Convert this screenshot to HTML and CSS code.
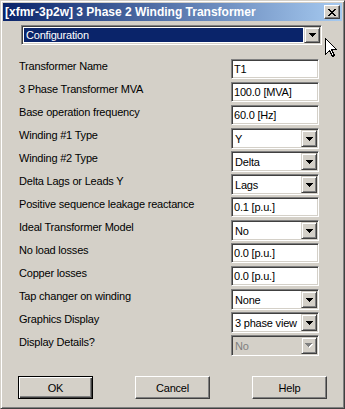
FILE: index.html
```html
<!DOCTYPE html>
<html lang="en">
<head>
  <meta charset="UTF-8">
  <title>[xfmr-3p2w] 3 Phase 2 Winding Transformer</title>
  <link rel="stylesheet" href="styles.css">
</head>
<body>
  <div class="window">
    <div class="titlebar">
      <span class="title">[xfmr-3p2w] 3 Phase 2 Winding Transformer</span>
      <div class="close">
        <svg width="8" height="7" viewBox="0 0 8 7" shape-rendering="crispEdges">
          <path d="M0 0h2v1h-2zM6 0h2v1h-2zM1 1h2v1h-2zM5 1h2v1h-2zM2 2h4v1h-4zM3 3h2v1h-2zM2 4h4v1h-4zM1 5h2v1h-2zM5 5h2v1h-2zM0 6h2v1h-2zM6 6h2v1h-2z" fill="#000"/>
        </svg>
      </div>
    </div>

    <!-- page selector -->
    <div class="field combo config">
      <div class="value"><span class="highlight">Configuration</span></div>
      <div class="arrow"><svg width="7" height="4" viewBox="0 0 7 4" shape-rendering="crispEdges"><path d="M0 0h7v1h-7zM1 1h5v1h-5zM2 2h3v1h-3zM3 3h1v1h-1z"/></svg></div>
    </div>

    <div class="form">
      <div class="label">Transformer Name</div>
      <div class="field edit"><div class="value">T1</div></div>

      <div class="label">3 Phase Transformer MVA</div>
      <div class="field edit"><div class="value">100.0 [MVA]</div></div>

      <div class="label">Base operation frequency</div>
      <div class="field edit"><div class="value">60.0 [Hz]</div></div>

      <div class="label">Winding #1 Type</div>
      <div class="field combo"><div class="value">Y</div><div class="arrow"><svg width="7" height="4" viewBox="0 0 7 4" shape-rendering="crispEdges"><path d="M0 0h7v1h-7zM1 1h5v1h-5zM2 2h3v1h-3zM3 3h1v1h-1z"/></svg></div></div>

      <div class="label">Winding #2 Type</div>
      <div class="field combo"><div class="value">Delta</div><div class="arrow"><svg width="7" height="4" viewBox="0 0 7 4" shape-rendering="crispEdges"><path d="M0 0h7v1h-7zM1 1h5v1h-5zM2 2h3v1h-3zM3 3h1v1h-1z"/></svg></div></div>

      <div class="label">Delta Lags or Leads Y</div>
      <div class="field combo"><div class="value">Lags</div><div class="arrow"><svg width="7" height="4" viewBox="0 0 7 4" shape-rendering="crispEdges"><path d="M0 0h7v1h-7zM1 1h5v1h-5zM2 2h3v1h-3zM3 3h1v1h-1z"/></svg></div></div>

      <div class="label">Positive sequence leakage reactance</div>
      <div class="field edit"><div class="value">0.1 [p.u.]</div></div>

      <div class="label">Ideal Transformer Model</div>
      <div class="field combo"><div class="value">No</div><div class="arrow"><svg width="7" height="4" viewBox="0 0 7 4" shape-rendering="crispEdges"><path d="M0 0h7v1h-7zM1 1h5v1h-5zM2 2h3v1h-3zM3 3h1v1h-1z"/></svg></div></div>

      <div class="label">No load losses</div>
      <div class="field edit"><div class="value">0.0 [p.u.]</div></div>

      <div class="label">Copper losses</div>
      <div class="field edit"><div class="value">0.0 [p.u.]</div></div>

      <div class="label">Tap changer on winding</div>
      <div class="field combo"><div class="value">None</div><div class="arrow"><svg width="7" height="4" viewBox="0 0 7 4" shape-rendering="crispEdges"><path d="M0 0h7v1h-7zM1 1h5v1h-5zM2 2h3v1h-3zM3 3h1v1h-1z"/></svg></div></div>

      <div class="label">Graphics Display</div>
      <div class="field combo"><div class="value">3 phase view</div><div class="arrow"><svg width="7" height="4" viewBox="0 0 7 4" shape-rendering="crispEdges"><path d="M0 0h7v1h-7zM1 1h5v1h-5zM2 2h3v1h-3zM3 3h1v1h-1z"/></svg></div></div>

      <div class="label">Display Details?</div>
      <div class="field combo disabled"><div class="value">No</div><div class="arrow"><svg width="8" height="5" viewBox="0 0 8 5" shape-rendering="crispEdges"><path d="M1 1h7v1h-7zM2 2h5v1h-5zM3 3h3v1h-3zM4 4h1v1h-1z" fill="#fff"/><path d="M0 0h7v1h-7zM1 1h5v1h-5zM2 2h3v1h-3zM3 3h1v1h-1z" fill="#808080"/></svg></div></div>
    </div>

    <div class="buttons">
      <div class="btn default">OK</div>
      <div class="btn">Cancel</div>
      <div class="btn">Help</div>
    </div>

    <!-- mouse pointer over the dialog -->
    <svg class="cursor" width="13" height="20" viewBox="0 0 13 20" shape-rendering="crispEdges">
      <path d="M0.5 0.5 L0.5 16.5 L4.5 12.5 L7.5 18.5 L9.5 17.5 L6.5 11.5 L11.5 11.5 Z" fill="#fff" stroke="#000" stroke-width="1"/>
    </svg>
  </div>
</body>
</html>
```

FILE: styles.css
```css
body {
  margin: 0;
  background: #d4d0c8;
  font-family: "Liberation Sans", Arial, sans-serif;
  font-size: 11px;
  letter-spacing: -0.2px;
  color: #000;
}
.window {
  position: relative;
  width: 345px;
  height: 409px;
  box-sizing: border-box;
  border: 1px solid;
  border-color: #d4d0c8 #404040 #404040 #d4d0c8;
  box-shadow: inset 1px 1px #fff, inset -1px -1px #808080;
  padding: 2px;
  display: flex;
  flex-direction: column;
  align-items: flex-start;
}
.titlebar {
  align-self: stretch;
  height: 18px;
  background: linear-gradient(to right, #0a246a, #a6caf0);
  display: flex;
  align-items: center;
  justify-content: space-between;
  padding: 0 2px 0 2px;
  color: #fff;
  font-weight: bold;
  font-size: 12px;
  letter-spacing: 0;
}
.close {
  width: 16px;
  height: 14px;
  box-sizing: border-box;
  background: #d4d0c8;
  border: 1px solid;
  border-color: #fff #404040 #404040 #fff;
  box-shadow: inset -1px -1px #808080;
  display: flex;
  align-items: center;
  justify-content: center;
}

/* sunken fields */
.field {
  box-sizing: border-box;
  display: flex;
  background: #fff;
  border: 1px solid;
  border-color: #808080 #fff #fff #808080;
  box-shadow: inset 1px 1px #404040, inset -1px -1px #d4d0c8;
  padding: 1px;
}
.field .value {
  flex: 1;
  display: flex;
  align-items: center;
  padding-left: 1px;
  white-space: nowrap;
  overflow: hidden;
}
.edit {
  width: 88px;
  height: 20px;
}
.combo {
  width: 88px;
  height: 21px;
}
.combo .value {
  padding-left: 2px;
}
.arrow {
  width: 16px;
  box-sizing: border-box;
  background: #d4d0c8;
  border: 1px solid;
  border-color: #d4d0c8 #404040 #404040 #d4d0c8;
  box-shadow: inset 1px 1px #fff, inset -1px -1px #808080;
  display: flex;
  align-items: center;
  justify-content: center;
}
.disabled {
  background: #d4d0c8;
  color: #808080;
}

.config {
  width: 301px;
  height: 20px;
  margin: 4px 0 0 18px;
}
.config .value {
  padding: 1px;
}
.highlight {
  flex: 1;
  align-self: stretch;
  display: flex;
  align-items: center;
  background: #0a246a;
  color: #fff;
  padding-left: 2px;
}

.form {
  display: grid;
  grid-template-columns: 212px 88px;
  grid-auto-rows: 23px;
  margin: 14px 0 0 16px;
}
.label {
  padding-top: 1px;
  line-height: 13px;
}

.buttons {
  display: flex;
  gap: 42px;
  margin: 18px 0 0 15px;
}
.btn {
  width: 75px;
  height: 23px;
  box-sizing: border-box;
  border: 1px solid;
  border-color: #fff #404040 #404040 #fff;
  box-shadow: inset -1px -1px #808080;
  display: flex;
  align-items: center;
  justify-content: center;
}
.btn.default {
  border-color: #000;
  box-shadow: inset 1px 1px #fff, inset -1px -1px #404040, inset -2px -2px #808080;
}

.cursor {
  position: absolute;
  left: 324px;
  top: 37px;
}
```
